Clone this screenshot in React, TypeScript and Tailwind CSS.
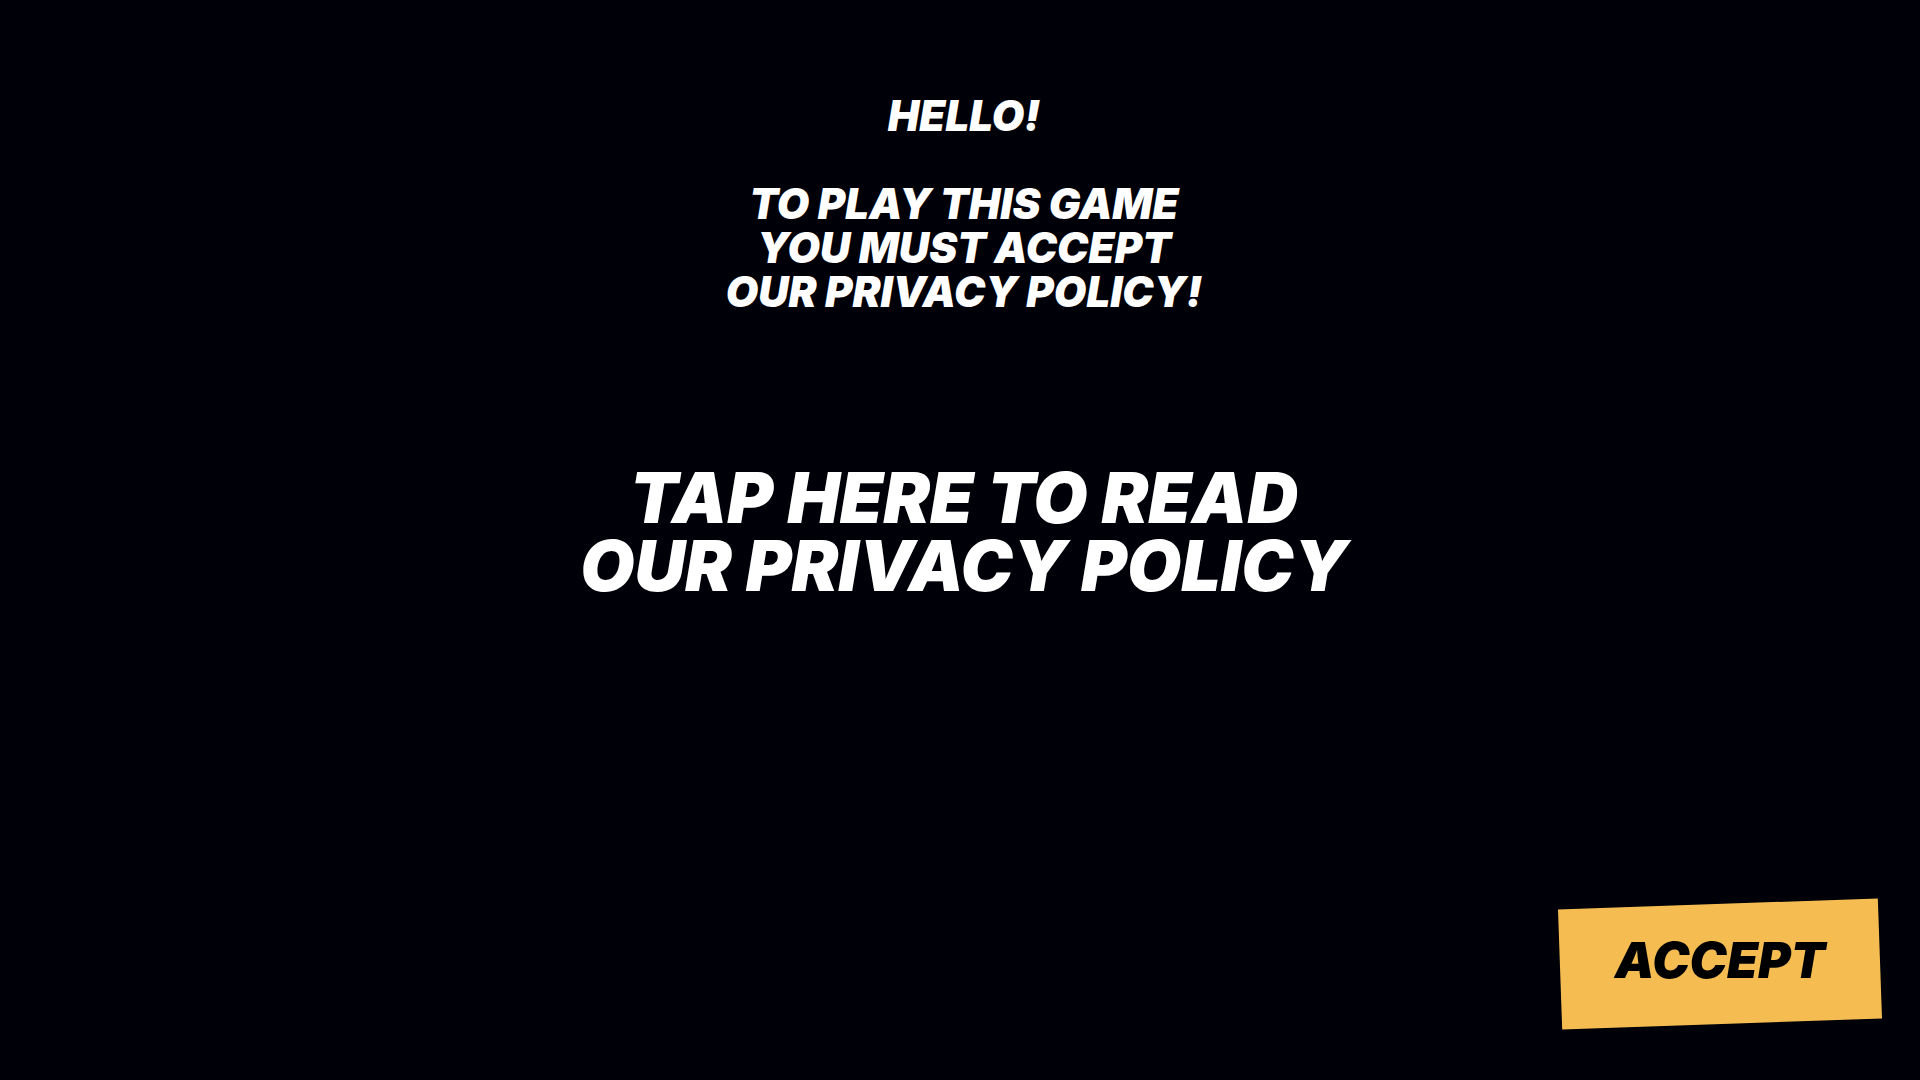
export default function App() {
  return (
    <main className="flex min-h-screen flex-col items-center bg-[#000008] pl-2 font-['Inter',sans-serif] font-black text-white italic">
      <h1 className="mt-[94px] text-center text-[42px] leading-[44px]">HELLO!</h1>
      <p className="mt-11 text-center text-[42px] leading-[44px]">
        TO PLAY THIS GAME
        <br />
        YOU MUST ACCEPT
        <br />
        OUR PRIVACY POLICY!
      </p>
      <a href="#privacy" className="mt-[150px] text-center text-[70px] leading-[68px]">
        TAP HERE TO READ
        <br />
        OUR PRIVACY POLICY
      </a>
      <button
        type="button"
        className="mt-auto mr-10 mb-14 h-[120px] w-80 -rotate-2 self-end bg-[#f5bd51] pb-2 text-[50px] leading-[50px] text-black italic"
      >
        <span className="inline-block rotate-2">ACCEPT</span>
      </button>
    </main>
  );
}
